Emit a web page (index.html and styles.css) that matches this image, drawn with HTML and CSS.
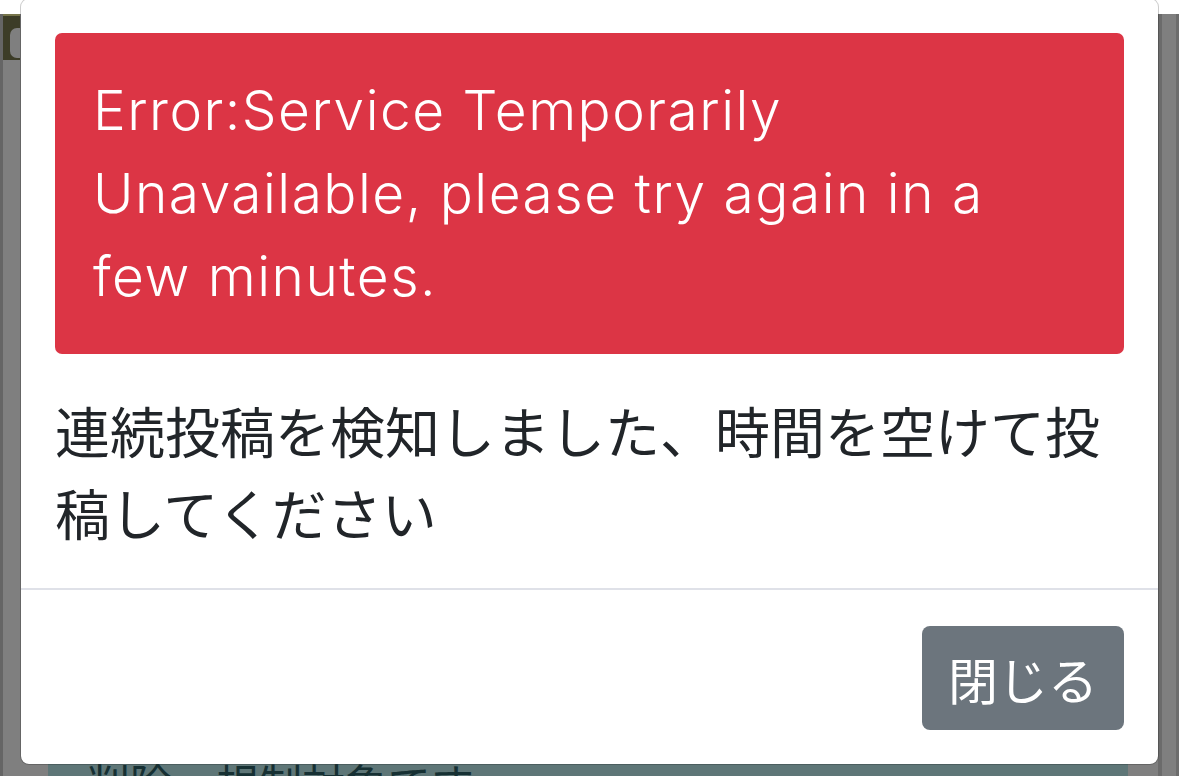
FILE: index.html
```html
<!DOCTYPE html>
<html lang="ja">
<head>
<meta charset="utf-8">
<title>エラー</title>
<link rel="stylesheet" href="styles.css">
</head>
<body>
<div class="page">
  <div class="top-gap"></div>
  <div class="under">
    <div class="left-rail">
      <div class="widget"><div class="widget-inner"></div></div>
    </div>
    <div class="main">
      <div class="info-box">削除・規制対象です</div>
    </div>
    <div class="right-rail"></div>
  </div>

  <div class="backdrop"></div>

  <div class="modal">
    <div class="modal-body">
      <div class="alert">Error:Service Temporarily Unavailable, please try again in a few minutes.</div>
      <p class="message">連続投稿を検知しました、時間を空けて投稿してください</p>
    </div>
    <div class="modal-footer">
      <button class="btn-close" type="button">閉じる</button>
    </div>
  </div>
</div>
</body>
</html>
```

FILE: styles.css
```css
* { box-sizing: border-box; }

html, body {
  margin: 0;
  padding: 0;
  background: #ffffff;
}

.page {
  position: relative;
  width: 1179px;
  height: 776px;
  overflow: hidden;
  display: flex;
  flex-direction: column;
  background: #ffffff;
  font-family: Inter, "Noto Sans CJK JP", sans-serif;
  color: #212529;
}

.top-gap {
  height: 14px;
  flex: none;
}

.under {
  flex: 1;
  display: flex;
}

.left-rail {
  width: 20px;
  flex: none;
  border-left: 3px solid #cacaca;
}

.widget {
  height: 46px;
  background: #78784e;
  border-top: 2px solid #ece894;
  padding: 12px 0 0 7px;
}

.widget-inner {
  height: 30px;
  background: #ffffff;
  border-radius: 7px 0 0 7px;
}

.main {
  flex: 1;
  padding: 706px 30px 0 28px;
}

.info-box {
  height: 120px;
  background: #bcecee;
  color: #2c6066;
  font-family: "Noto Sans CJK JP", sans-serif;
  font-size: 43px;
  line-height: 1;
  padding: 41px 0 0 39px;
  white-space: nowrap;
}

.right-rail {
  width: 21px;
  flex: none;
  border-left: 4px solid #d6d6d6;
  border-right: 3px solid #d8d8d8;
}

.backdrop {
  position: absolute;
  top: 14px;
  left: 0;
  right: 0;
  bottom: 0;
  background: rgba(0, 0, 0, 0.5);
}

.modal {
  position: absolute;
  left: 20px;
  top: -2px;
  width: 1139px;
  background: #ffffff;
  background-clip: padding-box;
  border: 1px solid rgba(0, 0, 0, 0.2);
  border-radius: 9px;
}

.modal-body {
  padding: 34px 34px 36px 34px;
}

.alert {
  background: #dc3545;
  color: #ffffff;
  border-radius: 7px;
  padding: 36px 38px;
  font-family: Inter, sans-serif;
  font-weight: 300;
  font-size: 55px;
  letter-spacing: 1.5px;
  line-height: 83px;
  margin-bottom: 34px;
}

.message {
  margin: 0;
  font-family: "Noto Sans CJK JP", sans-serif;
  font-size: 55px;
  line-height: 82px;
  color: #212529;
}

.modal-footer {
  border-top: 2px solid #dfe1e8;
  padding: 36px 34px 34px 34px;
  display: flex;
  justify-content: flex-end;
}

.btn-close {
  width: 202px;
  height: 104px;
  background: #6c757d;
  color: #ffffff;
  border: none;
  border-radius: 8px;
  font-family: "Noto Sans CJK JP", sans-serif;
  font-size: 50px;
  line-height: 1;
  padding: 0;
  cursor: pointer;
}
```
